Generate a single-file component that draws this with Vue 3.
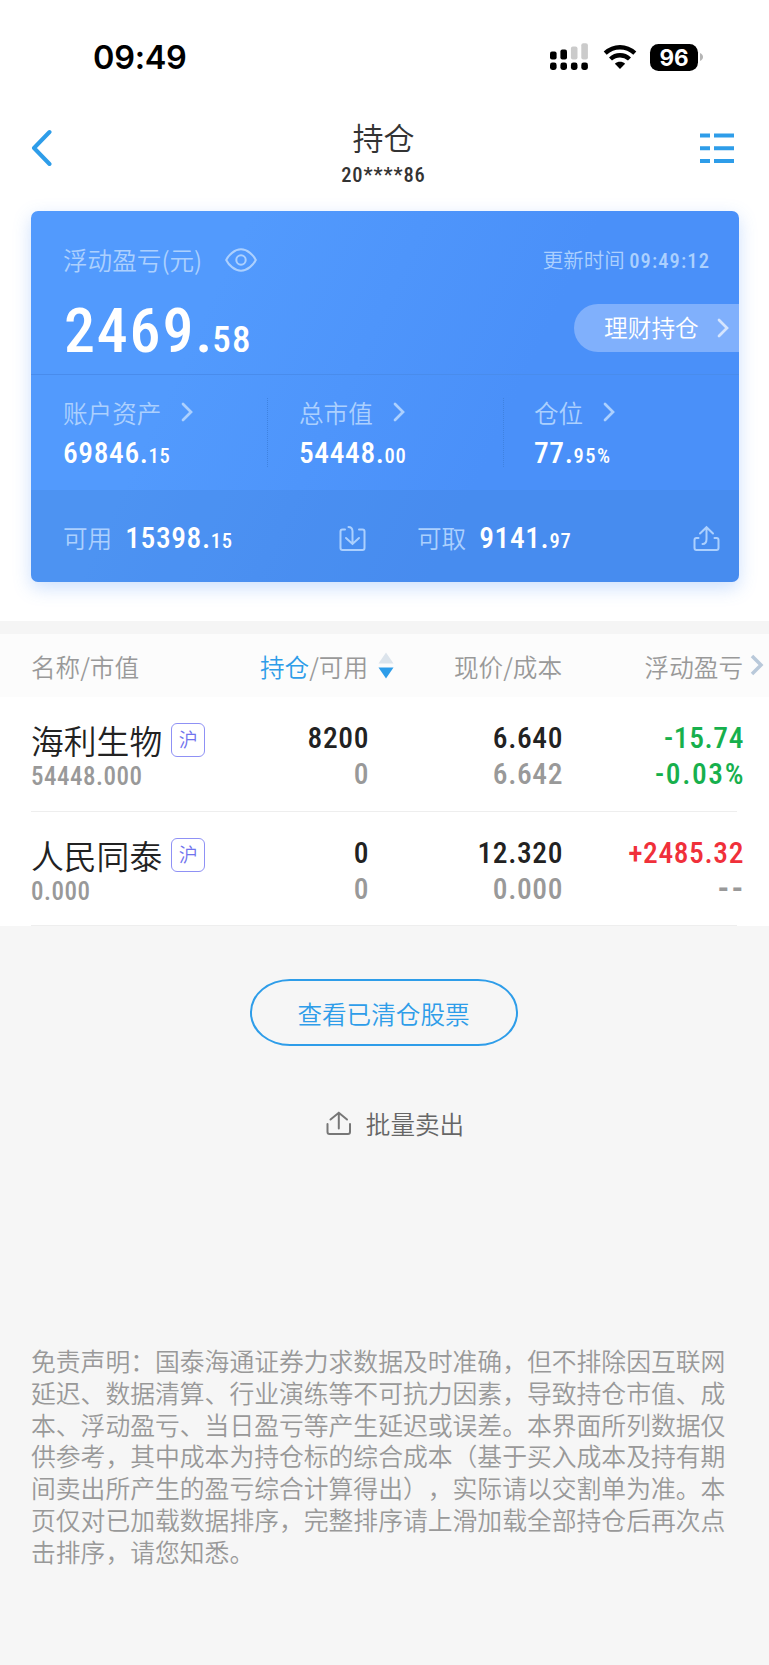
<template>
  <div class="page">
    <header class="status-bar">
      <span class="time">09:49</span>
      <div class="status-icons">
        <svg class="signal" width="38" height="28" viewBox="0 0 38 28">
          <g fill="#000">
            <rect x="0" y="8.5" width="6.6" height="8" rx="2" />
            <rect x="10.4" y="6.5" width="6.6" height="10" rx="2" />
            <rect x="0" y="19.6" width="6.6" height="7.4" rx="2.4" />
            <rect x="10.4" y="19.6" width="6.6" height="7.4" rx="2.4" />
            <rect x="20.9" y="19.6" width="6.6" height="7.4" rx="2.4" />
            <rect x="31.3" y="19.6" width="6.6" height="7.4" rx="2.4" />
          </g>
          <g fill="#cbcbcb">
            <rect x="20.9" y="3.4" width="6.6" height="13.1" rx="2" />
            <rect x="31.3" y="0.2" width="6.6" height="16.3" rx="2" />
          </g>
        </svg>
        <svg class="wifi" width="34" height="26" viewBox="0 0 34 26">
          <g fill="none" stroke="#000" stroke-width="4.4">
            <path d="M2.2 9.2C10.8 1.2 23.2 1.2 31.8 9.2" />
            <path d="M7.5 15C13 9.9 21 9.9 26.5 15" />
          </g>
          <path d="M17 25L11.9 19.8C14.8 17.2 19.2 17.2 22.1 19.8Z" />
        </svg>
        <div class="battery">96</div>
        <svg class="battery-tip" width="4" height="10" viewBox="0 0 4 10">
          <path d="M0 1C4 2.6 4 7.4 0 9Z" fill="#b5b5b5" />
        </svg>
      </div>
    </header>

    <nav class="nav">
      <svg class="back" width="22" height="38" viewBox="0 0 22 38">
        <path d="M19.5 3L4 19L19.5 35" />
      </svg>
      <div class="nav-title">
        <h1>持仓</h1>
        <p class="num">20****86</p>
      </div>
      <svg class="menu" width="34" height="32" viewBox="0 0 34 32">
        <path d="M0 3.5H10M14 3.5H34M0 16.2H10M14 16.2H34M0 28.9H10M14 28.9H34" />
      </svg>
    </nav>

    <section class="card">
      <div class="summary">
        <div class="summary-head">
          <span class="label">浮动盈亏(元)</span>
          <svg class="eye" width="32" height="24" viewBox="0 0 32 24">
            <path d="M1.2 12C3.5 7.2 9.5 1.3 16 1.3S28.5 7.2 30.8 12C28.5 16.8 22.5 22.7 16 22.7S3.5 16.8 1.2 12Z" />
            <circle cx="16" cy="12" r="4.7" />
          </svg>
          <span class="update">更新时间 <span class="num">09:49:12</span></span>
        </div>
        <div class="summary-body">
          <p class="profit num">2469.<small>58</small></p>
          <button class="pill">
            <span>理财持仓</span>
            <svg class="chevron" width="12" height="20" viewBox="0 0 12 20"><path d="M2 2L10 10L2 18" /></svg>
          </button>
        </div>
      </div>

      <div class="stats">
        <div v-for="item in stats" :key="item.label" class="stat">
          <div class="stat-label">
            <span>{{ item.label }}</span>
            <svg class="chevron" width="12" height="20" viewBox="0 0 12 20"><path d="M2 2L10 10L2 18" /></svg>
          </div>
          <p class="amount num">{{ item.int }}.<small>{{ item.frac }}</small></p>
        </div>
      </div>

      <div class="funds">
        <div class="fund available">
          <span class="fund-label">可用</span>
          <p class="amount num">15398.<small>15</small></p>
          <svg class="fund-icon" width="27" height="27" viewBox="0 0 27 27">
            <path d="M6 4.5H3.5Q1.5 4.5 1.5 6.5V23Q1.5 25 3.5 25H23.5Q25.5 25 25.5 23V6.5Q25.5 4.5 23.5 4.5H20" />
            <path d="M9.5 2Q13.2 2 13.5 6V18.5M7 13L13.5 19L20 13" />
          </svg>
        </div>
        <div class="fund">
          <span class="fund-label">可取</span>
          <p class="amount num">9141.<small>97</small></p>
          <svg class="fund-icon" width="27" height="27" viewBox="0 0 27 27">
            <path d="M5.5 13H3.5Q1.5 13 1.5 15V23Q1.5 25 3.5 25H23.5Q25.5 25 25.5 23V15Q25.5 13 23.5 13H21.5" />
            <path d="M9.5 19Q13.5 19 13.5 14V2.5M7 8.5L13.5 2.2L20 8.5" />
          </svg>
        </div>
      </div>
    </section>

    <section class="positions">
      <div class="row table-head">
        <span class="col-name">名称/市值</span>
        <span class="col-qty"><em>持仓</em>/可用</span>
        <svg class="sort" width="16" height="28" viewBox="0 0 16 28">
          <path d="M8 0.5L15.5 11.5H0.5Z" fill="#dce4ec" />
          <path d="M8 26.5L15.5 15.5H0.5Z" fill="#2e9de9" />
        </svg>
        <span class="col-price">现价/成本</span>
        <span class="col-profit">浮动盈亏</span>
        <svg class="more" width="14" height="22" viewBox="0 0 14 22"><path d="M2 2L11 11L2 20" /></svg>
      </div>
      <div v-for="stock in stocks" :key="stock.name" class="row stock">
        <div class="col-name">
          <div class="stock-title">
            <span class="stock-name">{{ stock.name }}</span>
            <span class="market">沪</span>
          </div>
          <p class="market-value num">{{ stock.value }}</p>
        </div>
        <div class="col-qty num">
          <p>{{ stock.qty }}</p>
          <p class="muted">{{ stock.usable }}</p>
        </div>
        <div class="col-price num">
          <p>{{ stock.price }}</p>
          <p class="muted">{{ stock.cost }}</p>
        </div>
        <div :class="['col-profit', 'num', stock.trend]">
          <p>{{ stock.profit }}</p>
          <p :class="['rate', { none: stock.rate === '--' }]">{{ stock.rate }}</p>
        </div>
      </div>
    </section>

    <button class="cleared">查看已清仓股票</button>

    <button class="batch">
      <svg width="26" height="25" viewBox="0 0 26 25">
        <path d="M1.5 13V21Q1.5 23 3.5 23H22Q24 23 24 21V13M12.8 17.5V2M4.5 8.5L12.8 1.8L21 8.5" />
      </svg>
      <span>批量卖出</span>
    </button>

    <p class="disclaimer">{{ disclaimer }}</p>
  </div>
</template>

<script setup>
const stats = [
  { label: '账户资产', int: '69846', frac: '15' },
  { label: '总市值', int: '54448', frac: '00' },
  { label: '仓位', int: '77', frac: '95%' }
]

const stocks = [
  {
    name: '海利生物',
    value: '54448.000',
    qty: '8200',
    usable: '0',
    price: '6.640',
    cost: '6.642',
    profit: '-15.74',
    rate: '-0.03%',
    trend: 'down'
  },
  {
    name: '人民同泰',
    value: '0.000',
    qty: '0',
    usable: '0',
    price: '12.320',
    cost: '0.000',
    profit: '+2485.32',
    rate: '--',
    trend: 'up'
  }
]

const disclaimer = [
  '免责声明：国泰海通证券力求数据及时准确，但不排除因互联网',
  '延迟、数据清算、行业演练等不可抗力因素，导致持仓市值、成',
  '本、浮动盈亏、当日盈亏等产生延迟或误差。本界面所列数据仅',
  '供参考，其中成本为持仓标的综合成本（基于买入成本及持有期',
  '间卖出所产生的盈亏综合计算得出），实际请以交割单为准。本',
  '页仅对已加载数据排序，完整排序请上滑加载全部持仓后再次点',
  '击排序，请您知悉。'
].join('\n')
</script>

<style>
body {
  background: #f6f6f6;
}
</style>

<style scoped>
* {
  box-sizing: border-box;
}

h1,
p {
  margin: 0;
}

button {
  padding: 0;
  border: none;
  background: none;
  font-family: inherit;
}

svg {
  display: block;
  flex: none;
}

.page {
  display: flex;
  flex-direction: column;
  width: 769px;
  height: 1665px;
  overflow: hidden;
  background: linear-gradient(#fff 621px, #f6f6f6 621px);
  font-family: "Noto Sans CJK SC", sans-serif;
  font-weight: 350;
  font-size: 24.6px;
  white-space: nowrap;
}

.num {
  font-family: Roboto, sans-serif;
  font-stretch: 87.5%;
  font-weight: 500;
}

/* Status bar */
.status-bar {
  display: flex;
  justify-content: space-between;
  height: 114px;
  padding: 37px 65px 0 93px;
}

.time {
  font: 600 32.5px/42px Inter, sans-serif;
  letter-spacing: -0.3px;
  color: #000;
}

.status-icons {
  display: flex;
  align-items: center;
  height: 40px;
}

.signal {
  margin-right: 1px;
}

.wifi {
  margin-left: 14px;
}

.battery {
  width: 48px;
  height: 27px;
  margin-left: 13px;
  border-radius: 8.5px;
  background: #000;
  color: #fff;
  font: 700 22.5px/27px Inter, sans-serif;
  text-align: center;
}

.battery-tip {
  margin-left: 2px;
}

/* Navigation */
.nav {
  display: flex;
  justify-content: space-between;
  height: 96px;
  padding: 0 35px 0 30px;
}

.back {
  margin-top: 15px;
  fill: none;
  stroke: #2e9de9;
  stroke-width: 4;
  stroke-linecap: round;
  stroke-linejoin: round;
}

.nav-title {
  padding-left: 15px;
  text-align: center;
  color: #333;
}

.nav-title h1 {
  margin-top: 1px;
  font-size: 31px;
  font-weight: 350;
  line-height: 44px;
}

.nav-title p {
  margin-top: 4px;
  font-size: 20.5px;
  line-height: 24px;
  letter-spacing: 0.9px;
}

.menu {
  margin-top: 18px;
  fill: none;
  stroke: #2e9de9;
  stroke-width: 4;
}

/* Account card */
.card {
  width: 708px;
  height: 371px;
  margin: 1px 0 0 31px;
  overflow: hidden;
  border-radius: 7px;
  background: linear-gradient(115deg, #529afd 25%, #4a90f9 65%);
  box-shadow: 0 6px 18px rgba(74, 144, 249, 0.28);
  color: #fff;
}

.summary {
  height: 164px;
  border-bottom: 1px solid #498cec;
}

.summary-head {
  display: flex;
  align-items: center;
  height: 64px;
  padding: 33px 29px 0 32px;
  color: #acd0fe;
}

.label {
  margin-top: -1px;
  line-height: 30px;
}

.eye {
  margin-left: 23px;
  fill: none;
  stroke: #acd0fe;
  stroke-width: 2;
}

.update {
  margin-left: auto;
  font-size: 20.5px;
  line-height: 30px;
}

.update .num {
  letter-spacing: 1.1px;
}

.summary-body {
  display: flex;
  justify-content: space-between;
}

.profit {
  margin-left: 33px;
  padding-top: 20px;
  font-size: 62px;
  line-height: 72px;
  letter-spacing: 1.8px;
}

.profit small {
  margin-left: -2px;
  font-size: 37px;
  letter-spacing: 1.2px;
}

.pill {
  display: flex;
  align-items: center;
  width: 165px;
  height: 48px;
  margin-top: 29px;
  padding-left: 30px;
  border-radius: 24px 0 0 24px;
  background: #80b0fc;
  color: #fff;
  font-size: 23.7px;
  font-weight: 350;
}

.pill span {
  margin-top: -2px;
}

.pill .chevron {
  margin-left: 18px;
  stroke: #d5e5fe;
}

.chevron {
  fill: none;
  stroke: #acd0fe;
  stroke-width: 2.7;
  stroke-linecap: round;
}

.stats {
  display: flex;
  height: 115px;
  padding-top: 23px;
}

.stat {
  width: 236px;
  height: 69px;
  padding-left: 32px;
}

.stat + .stat {
  padding-left: 31px;
  border-left: 1px dotted #3f82df;
}

.stat:last-child {
  padding-left: 30px;
}

.stat-label {
  display: flex;
  align-items: center;
  height: 28px;
  color: #acd0fe;
}

.stat-label .chevron {
  margin-left: 20px;
}

.amount {
  font-size: 29.5px;
  line-height: 36px;
  letter-spacing: 0.6px;
}

.amount small {
  font-size: 20.5px;
  letter-spacing: 0.8px;
}

.stat .amount {
  margin-top: 9px;
}

.stat:last-child small {
  letter-spacing: 1.5px;
}

.funds {
  display: flex;
  height: 92px;
  padding: 4px 19px 0 32px;
  background: rgba(66, 128, 215, 0.28);
}

.fund {
  display: flex;
  align-items: center;
  flex: 1;
}

.fund.available {
  flex: none;
  width: 354px;
}

.fund-label {
  margin-top: -2px;
  color: #acd0fe;
}

.fund .amount {
  margin: 3px 0 0 13px;
}

.fund-icon {
  margin-left: auto;
  fill: none;
  stroke: #acd0fe;
  stroke-width: 2;
  stroke-linecap: round;
}

.available .fund-icon {
  margin-right: 51px;
}

/* Positions */
.positions {
  margin-top: 39px;
  border-top: 13px solid #f5f5f5;
  background: #fff;
}

.row {
  display: flex;
  padding-left: 31px;
}

.col-name {
  width: 200px;
}

.col-qty {
  width: 137px;
  text-align: right;
}

.col-price {
  width: 194px;
  text-align: right;
}

.col-profit {
  width: 181px;
  text-align: right;
}

.table-head {
  align-items: center;
  height: 63px;
  background: #fcfcfc;
  color: #999;
}

.table-head em {
  color: #2e9de9;
  font-style: normal;
}

.sort {
  margin: 0 0 0 10px;
}

.table-head .col-price {
  width: 168px;
}

.more {
  margin: 0 0 1px 7px;
  fill: none;
  stroke: #b9c9da;
  stroke-width: 3.5;
}

.stock {
  position: relative;
  height: 115px;
  color: #222;
  font-size: 29.5px;
}

.stock:last-child {
  height: 114px;
}

.stock > .num p {
  margin-right: -1px;
  line-height: 35.5px;
  letter-spacing: 0.6px;
}

.stock > .num {
  padding-top: 24px;
}

/* Divider stops short of the right edge */
.stock::after {
  content: "";
  position: absolute;
  left: 31px;
  right: 32px;
  bottom: 0;
  height: 1px;
  background: #eee;
}

.stock-title {
  display: flex;
  align-items: center;
  height: 34px;
  margin-top: 26px;
}

.stock-name {
  font-size: 32.8px;
  line-height: 34px;
}

.market {
  width: 34px;
  height: 34px;
  margin-left: 9px;
  border: 1.5px solid #8f91f5;
  border-radius: 6px;
  color: #7174ee;
  font-size: 19px;
  line-height: 30px;
  text-align: center;
}

.market-value {
  margin-top: 4px;
  color: #999;
  font-size: 25px;
  line-height: 32px;
  letter-spacing: 0.5px;
}

.muted,
.col-profit .none {
  color: #999;
}

.stock .col-profit .rate {
  margin-right: -2px;
  letter-spacing: 1.6px;
}

.stock .col-profit .none {
  margin-right: -3px;
  font-size: 36px;
  letter-spacing: 3px;
}

.down {
  color: #17b04d;
}

.up {
  color: #f0303a;
}

/* Footer actions */
.cleared {
  align-self: center;
  width: 268px;
  height: 67px;
  margin: 53px 2px 0 0;
  border: 2px solid #2e9de9;
  border-radius: 40px / 33px;
  color: #2e9de9;
  font-size: 24.6px;
  font-weight: 350;
}

.batch {
  display: flex;
  align-items: center;
  align-self: center;
  gap: 14px;
  height: 36px;
  margin: 59px 0 0 21px;
  color: #666;
  font-size: 24.6px;
  font-weight: 350;
}

.batch svg {
  fill: none;
  stroke: #777;
  stroke-width: 2;
  stroke-linecap: round;
}

.disclaimer {
  margin: 204px 0 0 31px;
  color: #999;
  font-size: 24.8px;
  line-height: 31.8px;
  white-space: pre;
  text-spacing-trim: space-all;
}
</style>
